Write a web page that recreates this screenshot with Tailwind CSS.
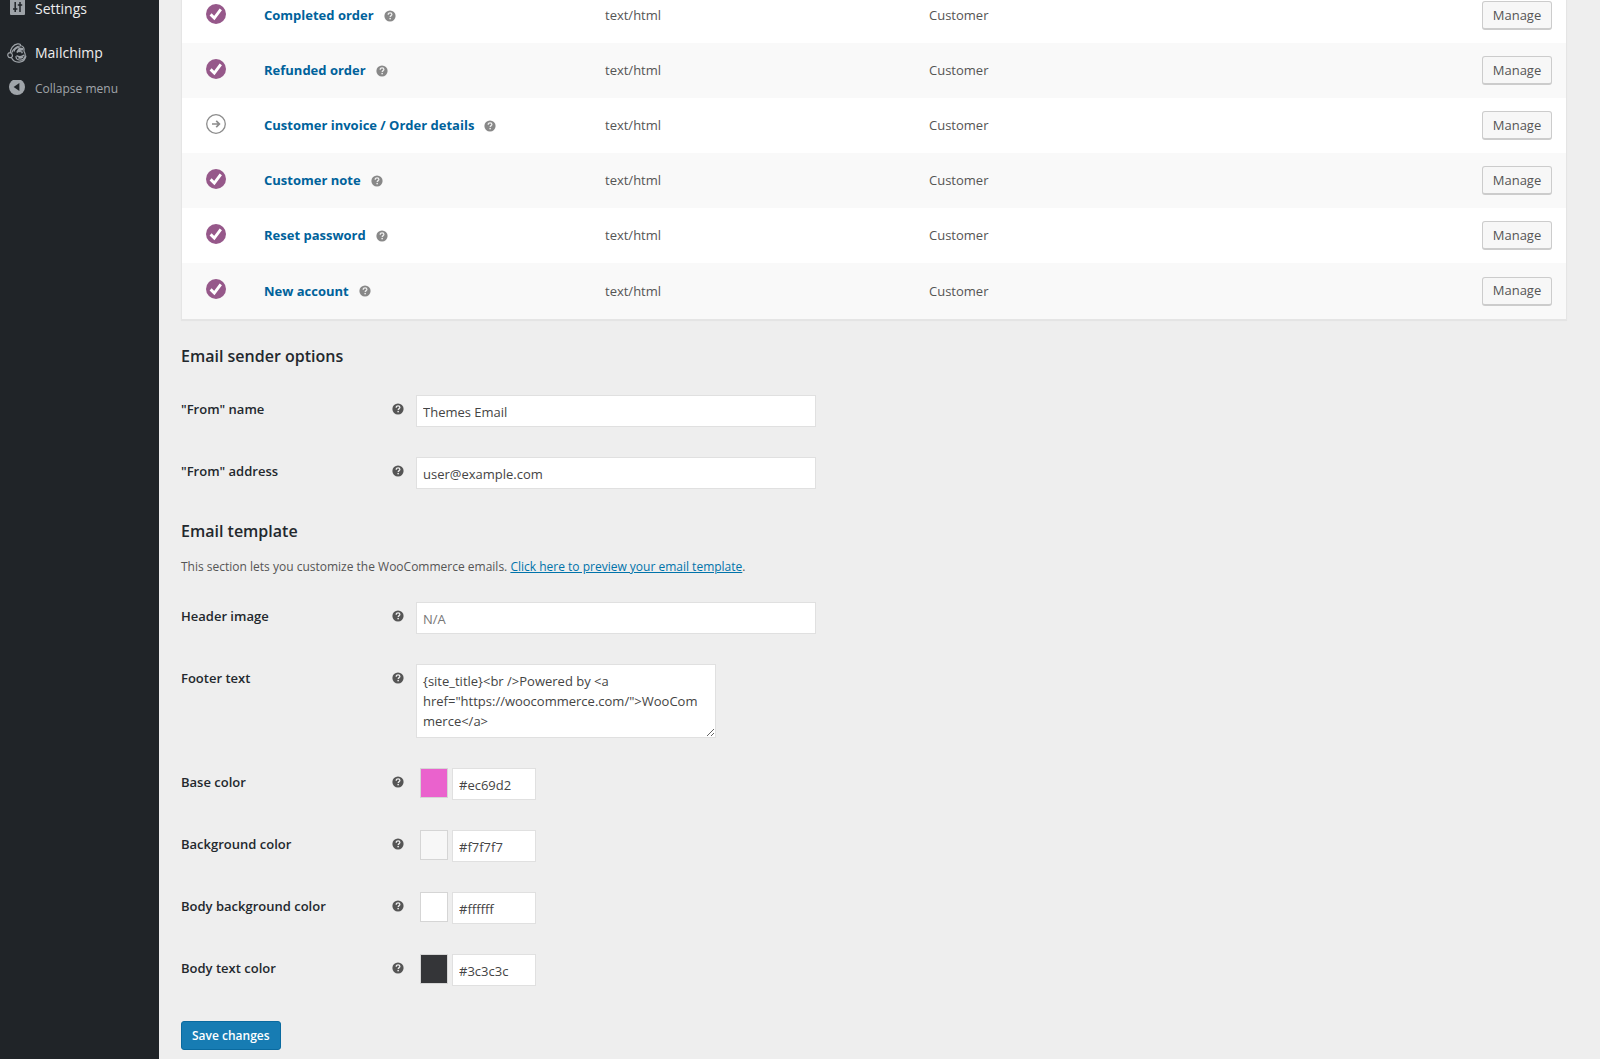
<!DOCTYPE html>
<html lang="en">
<head>
<meta charset="utf-8">
<title>Email settings</title>
<script src="https://cdn.jsdelivr.net/npm/@tailwindcss/browser@4"></script>
</head>
<body class="h-screen overflow-hidden bg-[#eeeeee] font-['Open_Sans','Noto_Sans',sans-serif] text-sm text-[#555]">
<svg class="hidden" aria-hidden="true">
  <symbol id="help" viewBox="0 0 12 12"><circle cx="6" cy="6" r="5.6" fill="currentColor"/><path d="M4.2 4.7C4.2 3.5 5 2.9 6.1 2.9S7.9 3.5 7.9 4.5C7.9 5.6 6.2 5.7 6.2 7" fill="none" stroke="#eee" stroke-width="1.3"/><rect x="5.4" y="7.9" width="1.5" height="1.4" fill="#eee"/></symbol>
  <symbol id="check" viewBox="0 0 20 20"><circle cx="10" cy="10" r="10" fill="#96588a"/><path d="M4.6 10.4 8.3 14 14.8 5.4" fill="none" stroke="#fff" stroke-width="2.9"/></symbol>
  <symbol id="manual" viewBox="0 0 20 20"><circle cx="10" cy="10" r="9.3" fill="#fff" stroke="#8c8c8c" stroke-width="1.3"/><path d="M6 10h7M10.2 6.8 13.4 10l-3.2 3.2" fill="none" stroke="#8c8c8c" stroke-width="1.7"/></symbol>
</svg>
<div class="flex h-full">
  <nav class="w-[159px] shrink-0 bg-[#202428] text-[#eee]">
    <a href="#" class="-mt-[7px] flex h-8 items-center font-medium"><svg class="mr-2 ml-[9px] size-[18px] text-[#9ea3a8]" viewBox="0 0 18 18"><rect x="1" y="-1" width="15" height="16" rx="1" fill="currentColor"/><path d="M6.2 2v10M11 2v10M4 9h4.400M8.800 5h4.400" stroke="#202428" stroke-width="1.5"/></svg>Settings</a>
    <a href="#" class="mt-3 flex h-8 items-center font-medium"><svg class="mr-2 ml-[7px] size-5 text-[#9ea3a8]" viewBox="0 0 20 20" fill="none" stroke="currentColor" stroke-width="1.2"><path d="M3.2 10.4C3.2 6 6.300 1.300 10.600.900c2.300-.2 3.300.6 2.600 2.100C9.800 3.200 6.500 5.700 4.900 9.600M3.400 9.700C1.200 9.600.500 11.300.900 12.900c.4 1.500 1.600 2 2.900 1.700 1.400-.4 1.900-1.500 1.500-2.900-.3-1.200-1-1.900-1.900-2ZM4.400 14.600c1.500 3.300 4.700 4.900 8.200 4.500 3.600-.4 6-3.100 6.400-6.300M13.300 2.500c3.100.3 4.200 2.600 3.600 5.500 1 1.800 1.700 3.300 1.200 5.100-.8 2.900-3.400 4.300-6 3.900-2.300-.4-3.300-1.900-3-3.800M7 8.500c.7-2.400 2.700-4 5.400-4"/><path d="M10 9.200c1-1.300 2.600-1.300 3.700-.3M14.500 8.300l.8 2M9.500 12.700c2.600 1.500 5.200 1.300 7.700-.5M11.300 14.700c1.900.6 3.400.3 4.700-.8" stroke-width="1.500"/><path d="M12.200 4.500c-1.700 2-2.600 3.700-2.500 5.400l4.200-2.200 2.300-.4V5.100Z" fill="currentColor" stroke="none"/></svg>Mailchimp</a>
    <button class="mt-1 flex h-8 items-center text-xs text-[#a0a5aa]"><svg class="mr-2 ml-[9px] size-[18px]" viewBox="0 0 18 18"><circle cx="8" cy="7" r="8" fill="currentColor"/><path d="M10.400 3v8L4.600 7Z" fill="#202428"/></svg>Collapse menu</button>
  </nav>
  <main class="min-w-0 flex-1 overflow-hidden pr-[33px] pl-[22px]">
    <div class="-mt-[13px] border border-[#e5e5e5] bg-white shadow-[0_1px_1px_rgba(0,0,0,0.04)]">
    <table class="w-full table-fixed text-[13px]">
      <colgroup><col class="w-[82px]"><col class="w-[341px]"><col class="w-[324px]"><col><col class="w-[100px]"></colgroup>
      <tbody id="emails"></tbody>
    </table>
    </div>
    <form>
      <h2 class="mt-[22px] text-base leading-7 font-semibold text-[#23282d]">Email sender options</h2>
      <div class="mt-[25px] grid grid-cols-[235px_1fr] gap-y-[30px]" id="sender"></div>
      <h2 class="mt-7 text-base leading-7 font-semibold text-[#23282d]">Email template</h2>
      <p class="mt-3 text-xs leading-5">This section lets you customize the WooCommerce emails. <a href="#" class="text-[#0073aa] underline">Click here to preview your email template</a>.</p>
      <div class="mt-[25px] grid grid-cols-[235px_1fr] gap-y-[30px]" id="template"></div>
      <button type="button" class="mt-[35px] h-[29px] rounded-[3px] border border-[#0a6a9f] bg-[#177cb3] px-[10px] text-xs leading-none font-semibold text-white">Save changes</button>
    </form>
  </main>
</div>
<script>
const rows = [['Completed order','check'],['Refunded order','check'],['Customer invoice / Order details','manual'],['Customer note','check'],['Reset password','check'],['New account','check']];
document.getElementById('emails').innerHTML = rows.map(([name, icon]) => `
  <tr class="h-[55px] last:h-14 even:bg-[#f9f9f9]">
    <td class="pb-1 pl-6"><svg class="size-5"><use href="#${icon}"/></svg></td>
    <td><div class="flex items-center gap-[10px]"><a href="#" class="font-bold text-[#00629b]">${name}</a><svg class="size-3 text-[#888]"><use href="#help"/></svg></div></td>
    <td>text/html</td><td>Customer</td>
    <td class="pr-[14px] text-right"><button class="h-[29px] w-[70px] rounded-[3px] border border-b-2 border-[#ccc] bg-[#f7f7f7] text-[13px] leading-none">Manage</button></td>
  </tr>`).join('');
const label = (id, text) => `<label for="${id}" class="flex h-7 items-center justify-between pr-3 text-[13px] font-semibold text-[#23282d]">${text}<svg class="size-3 text-[#555]"><use href="#help"/></svg></label>`;
const box = 'h-8 border border-[#e0e0e0] bg-white px-[6px] pt-[2px] text-[13px] text-[#444] placeholder:text-[#777]';
const text = (id, name, value, type) => label(id, name) + `<input id="${id}" type="${type || 'text'}" class="${box} w-[400px]" ${value ? `value="${value}"` : 'placeholder="N/A"'}>`;
const color = (id, name, value, swatch) => label(id, name) + `<div class="flex gap-1 pl-1"><span class="h-[30px] w-7 border border-black/10 bg-clip-padding" style="background-color:${swatch}"></span><input id="${id}" type="text" class="${box} w-[84px]" value="${value}"></div>`;
document.getElementById('sender').innerHTML = text('from-name', '"From" name', 'Themes Email') + text('from-address', '"From" address', 'user@example.com', 'email');
document.getElementById('template').innerHTML = text('header-image', 'Header image', '')
  + label('footer-text', 'Footer text') + `<textarea id="footer-text" class="h-[74px] w-[300px] overflow-hidden border border-[#e0e0e0] bg-white px-[6px] py-[6px] text-[13px] leading-5 text-[#444]">{site_title}&lt;br /&gt;Powered by &lt;a href="https://woocommerce.com/"&gt;WooCommerce&lt;/a&gt;</textarea>`
  + color('base', 'Base color', '#ec69d2', '#ea62cd') + color('bg', 'Background color', '#f7f7f7', '#f7f7f7') + color('body-bg', 'Body background color', '#ffffff', '#ffffff') + color('body-text', 'Body text color', '#3c3c3c', '#343538');
</script>
</body>
</html>
